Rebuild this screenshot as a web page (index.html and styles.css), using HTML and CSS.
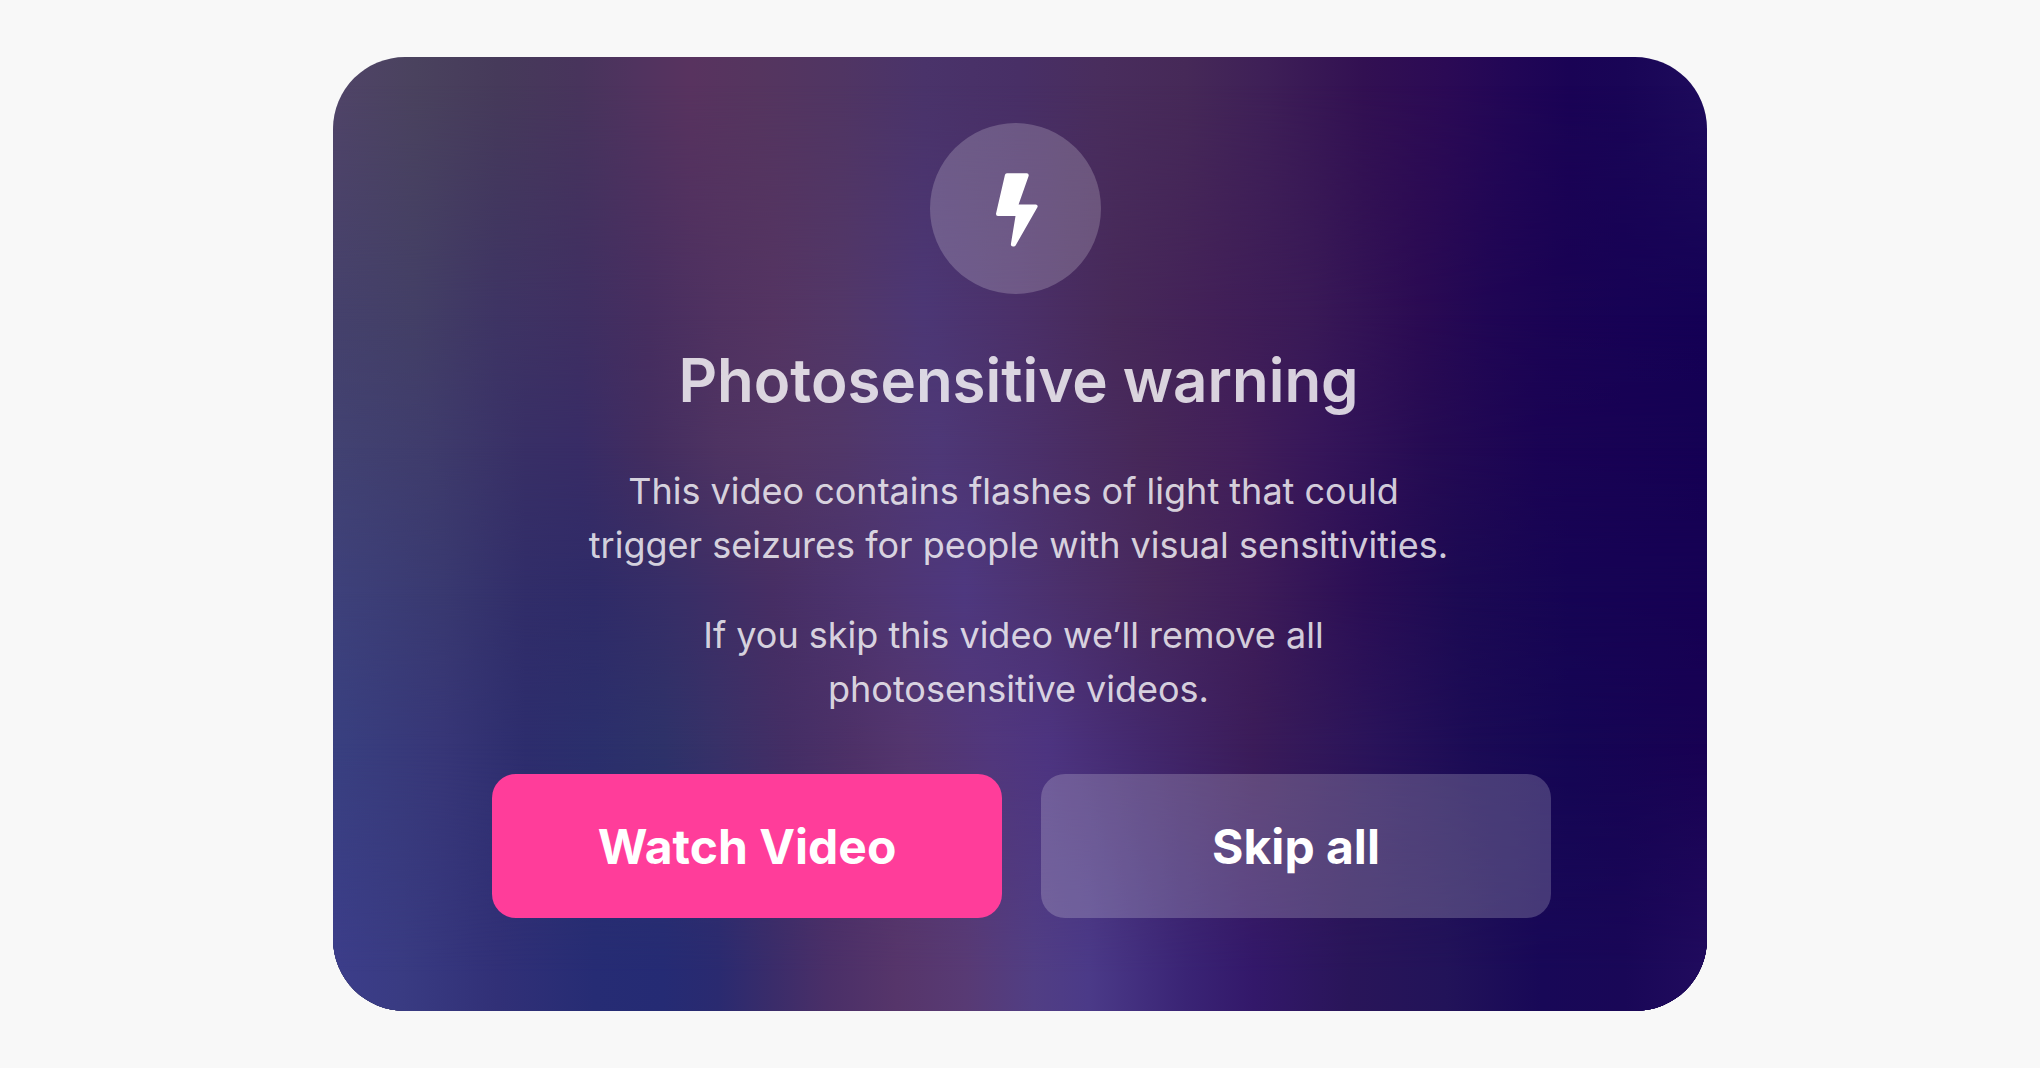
FILE: index.html
```html
<!DOCTYPE html>
<html lang="en">
<head>
<meta charset="utf-8">
<meta name="viewport" content="width=device-width, initial-scale=1">
<title>Photosensitive warning</title>
<link rel="stylesheet" href="styles.css">
</head>
<body>
<main class="warning" role="alertdialog" aria-labelledby="warning-title" aria-describedby="warning-text">
  <div class="backdrop" aria-hidden="true">
    <div class="glow glow-1"></div>
    <div class="glow glow-2"></div>
    <div class="glow glow-3"></div>
    <div class="glow glow-4"></div>
    <div class="glow glow-5"></div>
    <div class="glow glow-6"></div>
  </div>
  <div class="message">
    <div class="badge">
      <svg class="bolt" viewBox="0 0 127 222" aria-hidden="true">
        <path d="M33 6H93L60 100H120L54 215H51L66 123H6Z"/>
      </svg>
    </div>
    <h1 class="title" id="warning-title">Photosensitive warning</h1>
    <div class="copy" id="warning-text">
      <p>This video contains flashes of light that could&nbsp;<br>trigger seizures for people with visual sensitivities.</p>
      <p>If you skip this video we’ll remove all&nbsp;<br>photosensitive videos.</p>
    </div>
  </div>
  <div class="actions">
    <button class="button button-primary" type="button">Watch Video</button>
    <button class="button button-secondary" type="button">Skip all</button>
  </div>
</main>
</body>
</html>
```
FILE: styles.css
```css
* {
  box-sizing: border-box;
}

body {
  margin: 0;
  min-height: 100vh;
  padding: 56px 24px;
  display: flex;
  align-items: center;
  justify-content: center;
  background: #f8f8f8;
  color: #fff;
  font-family: Inter, "Liberation Sans", sans-serif;
}

.warning {
  position: relative;
  isolation: isolate;
  overflow: hidden;
  width: 100%;
  max-width: 1374px;
  padding: 66px 156px 93px 159px;
  border-radius: 72px;
}

/* Blurred video: bands of colour that fade into each other downwards */
.backdrop,
.glow {
  position: absolute;
  inset: 0;
}

.backdrop {
  z-index: -1;
}

.glow-1 {
  background: linear-gradient(90deg, #504468 0%, #4a425e 6%, #463a5a 12%, #48345c 18%, #50335f 22%, #58335f 26%, #55355f 31%, #503563 37%, #4a336a 43%, #482f66 50%, #492d5d 56%, #462958 62%, #3e1f57 68%, #321052 75%, #2b0a55 81%, #210656 86%, #1a0355 90%, #190556 94%, #1e0b5c 100%);
}

.glow-2 {
  background: linear-gradient(90deg, #45416c 0%, #433f66 6%, #3e3464 12%, #3f2f62 18%, #472e60 23%, #503261 28%, #543462 32%, #523768 37%, #4c3775 43%, #4b3069 50%, #472959 57%, #422058 64%, #3a1a57 71%, #2b0b53 79%, #200654 84%, #1a0354 89%, #170255 94%, #140155 100%);
  mask-image: linear-gradient(transparent 3%, #000 27%);
}

.glow-3 {
  background: linear-gradient(90deg, #424272 0%, #3f3c6c 7%, #382f66 14%, #382c66 18%, #432d60 23%, #4e3362 28%, #523665 33%, #513769 37%, #4e3877 44%, #4b306a 51%, #472859 59%, #421f5a 66%, #36165a 72%, #250b53 80%, #1a0354 88%, #150154 100%);
  mask-image: linear-gradient(transparent 27%, #000 41%);
}

.glow-4 {
  background: linear-gradient(90deg, #3e417b 0%, #393970 8%, #312d69 14%, #2f2b68 19%, #382e67 25%, #472e64 32%, #4e3572 40%, #4e387f 46%, #4b306c 53%, #47285c 60%, #3e1d59 67%, #2b0e55 75%, #1c0a53 82%, #160454 90%, #160154 100%);
  mask-image: linear-gradient(transparent 41%, #000 56%);
}

.glow-5 {
  background: linear-gradient(90deg, #394080 0%, #373677 8%, #2d2d6d 14%, #2b2f6c 19%, #2e3269 24%, #383168 28%, #442e65 33%, #4e3168 38%, #54366f 42%, #51377d 48%, #4d3480 52%, #43286d 59%, #3b1c59 67%, #29135a 76%, #1b0b55 83%, #150654 90%, #180153 100%);
  mask-image: linear-gradient(transparent 56%, #000 72%);
}

.glow-6 {
  background: linear-gradient(90deg, #3c3d8a 0%, #393b82 5%, #313077 12%, #262c74 19%, #252b74 24%, #2a2a70 28%, #3a2c6a 32%, #4a2f68 36%, #56356a 41%, #583a74 46%, #513e84 51%, #4b3a88 55%, #3a2475 62%, #33186a 67%, #291559 74%, #221359 81%, #180857 88%, #190757 94%, #210b5e 100%);
  mask-image: linear-gradient(transparent 72%, #000 96%);
}

.message {
  display: flex;
  flex-direction: column;
  align-items: center;
  padding-right: 6px;
  text-align: center;
}

.badge {
  display: flex;
  align-items: center;
  justify-content: center;
  width: 171px;
  height: 171px;
  margin-right: 6px;
  padding: 2px 0 0 2px;
  border-radius: 50%;
  background: rgb(255 255 255 / 20%);
}

.bolt {
  width: 42px;
  height: 74px;
  fill: #fff;
  stroke: #fff;
  stroke-width: 12;
  stroke-linejoin: round;
}

.title {
  margin: 50px 0 48px;
  font-size: 60px;
  line-height: 72px;
  font-weight: 600;
  color: rgb(255 255 255 / 80%);
}

.copy {
  display: grid;
  gap: 36px;
  font-size: 36px;
  font-weight: 400;
  line-height: 54px;
  color: rgb(255 255 255 / 80%);
}

.copy p {
  margin: 0;
}

.actions {
  display: grid;
  grid-template-columns: 1fr 1fr;
  gap: 39px;
  margin-top: 58px;
}

.button {
  height: 144px;
  border: 0;
  border-radius: 24px;
  color: #fff;
  font: inherit;
  font-size: 48px;
  font-weight: 700;
  cursor: pointer;
}

.button-primary {
  background: #ff3d9a;
}

.button-secondary {
  background: rgb(255 255 255 / 20%);
}
```
